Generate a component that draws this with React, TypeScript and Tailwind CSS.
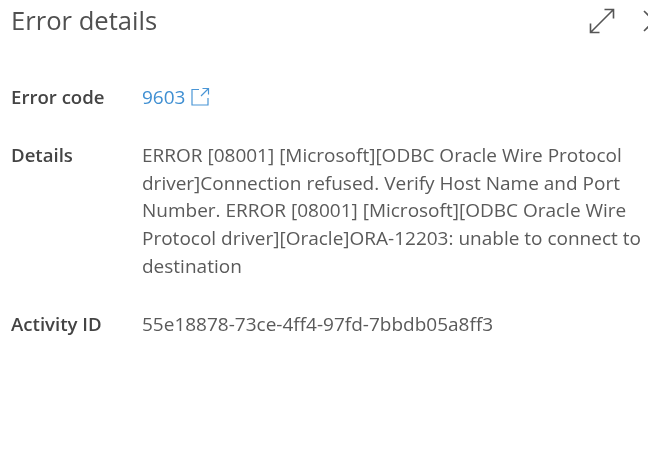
export default function App() {
  const font = { fontFamily: '"Open Sans", "Noto Sans", sans-serif' };
  return (
    <div className="w-[648px] h-[461px] bg-white overflow-hidden relative blur-[0.4px]" style={font}>
      <div className="flex items-center justify-between pl-[11px] pt-[6px] h-[36px] w-[680px]">
        <h1 className="text-[25.6px] leading-[32px] font-normal text-[#505050]">Error details</h1>
        <div className="flex items-center gap-[27px] pr-[14px]">
          <svg width="26" height="26" viewBox="0 0 26 26" fill="none" stroke="#555" strokeWidth="1.6">
            <path d="M1.5 24.5 24.5 1.5M15.5 1.5h9v9M1.5 15.5v9h9" />
          </svg>
          <svg width="24" height="24" viewBox="0 0 24 24" fill="none" stroke="#555" strokeWidth="1.6">
            <path d="M2 2 22 22M22 2 2 22" />
          </svg>
        </div>
      </div>
      <div className="mt-[47px] pl-[11px] grid grid-cols-[131px_500px] text-[#505050] text-[19px]">
        <div className="font-semibold text-[18.6px] leading-[28px] text-[#444]">Error code</div>
        <div className="flex items-center gap-[5px] leading-[28px] text-[#3f8fd2]">
          9603
          <svg width="20" height="20" viewBox="0 0 20 20" fill="none" stroke="#4a96d6" strokeWidth="1.2">
            <path d="M9 2.5H2v15.5h16V11M11 9l7-7M12.5 1.5h6v6" />
          </svg>
        </div>
        <div className="font-semibold text-[18.6px] leading-[28px] text-[#444] mt-[30px]">Details</div>
        <div className="leading-[27.7px] mt-[31px] text-[#5a5a5a]">
          ERROR [08001] [Microsoft][ODBC Oracle Wire Protocol driver]Connection refused. Verify Host Name and Port Number. ERROR [08001] [Microsoft][ODBC Oracle Wire Protocol driver][Oracle]ORA-12203: unable to connect to destination
        </div>
        <div className="font-semibold text-[18.6px] leading-[28px] text-[#444] mt-[29px]">Activity ID</div>
        <div className="leading-[28px] mt-[29px] text-[#5a5a5a]">55e18878-73ce-4ff4-97fd-7bbdb05a8ff3</div>
      </div>
    </div>
  );
}
